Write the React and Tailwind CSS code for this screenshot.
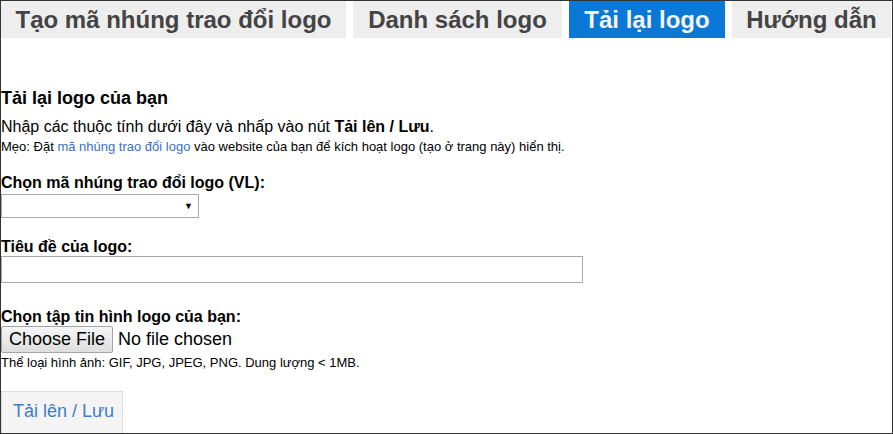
import React from "react";

const tabs = [
    { label: "Tạo mã nhúng trao đổi logo", width: "w-[345px]" },
    { label: "Danh sách logo", width: "w-[209px]" },
    { label: "Tải lại logo", width: "w-[156px]", active: true },
    { label: "Hướng dẫn", width: "w-[159px]" },
];

const App = () => {
    return (
        <div className="w-[893px] h-[434px] overflow-hidden border border-[#333] bg-white font-['Liberation_Sans',Arial,sans-serif] text-black">
            {/* Tabs */}
            <div className="flex gap-[7px]">
                {tabs.map((tab) => (
                    <div
                        key={tab.label}
                        className={`${tab.width} shrink-0 h-[37px] flex items-center justify-center text-[24px] font-bold leading-none ${
                            tab.active
                                ? "bg-[#0a78d7] text-[#f4f4f4]"
                                : "bg-[#eeeeee] text-[#444]"
                        }`}
                    >
                        {tab.label}
                    </div>
                ))}
            </div>

            {/* Form */}
            <div className="pt-[50px]">
                <h3 className="text-[18px] font-bold leading-[21px]">
                    Tải lại logo của bạn
                </h3>
                <p className="mt-[9px] text-[16px] leading-[18px]">
                    Nhập các thuộc tính dưới đây và nhấp vào nút{" "}
                    <b>Tải lên / Lưu</b>.
                </p>
                <p className="mt-[3px] text-[13px] leading-[15px]">
                    Mẹo: Đặt{" "}
                    <a href="#" className="text-[#3b6fc9]">
                        mã nhúng trao đổi logo
                    </a>{" "}
                    vào website của bạn để kích hoạt logo (tạo ở trang này) hiển thị.
                </p>

                <label className="block mt-[20px] text-[16px] font-bold leading-[18px]">
                    Chọn mã nhúng trao đổi logo (VL):
                </label>
                <div className="mt-[2px] w-[198px] h-[24px] border border-[#a9a9a9] flex items-center justify-end pr-[5px]">
                    <span className="text-[9px] leading-none">▼</span>
                </div>

                <label className="block mt-[20px] text-[16px] font-bold leading-[18px]">
                    Tiêu đề của logo:
                </label>
                <input
                    type="text"
                    className="block mt-0 w-[582px] h-[27px] border border-[#a9a9a9] outline-none"
                />

                <label className="block mt-[25px] text-[16px] font-bold leading-[18px]">
                    Chọn tập tin hình logo của bạn:
                </label>
                <div className="flex items-center gap-[5px] text-[18px] leading-[21px]">
                    <div className="w-[112px] h-[27px] flex items-center justify-center border border-[#a5a5a5] rounded-[2px] bg-gradient-to-b from-[#f6f6f6] to-[#dedede]">
                        Choose File
                    </div>
                    <span>No file chosen</span>
                </div>
                <p className="mt-[2px] text-[13px] leading-[15px]">
                    Thể loại hình ảnh: GIF, JPG, JPEG, PNG. Dung lượng &lt; 1MB.
                </p>

                <button className="flex items-start mt-[21px] w-[122px] h-[50px] border border-[#dddddd] bg-[#f4f4f4] pl-[11px] pt-[9px] text-[18px] leading-[21px] text-[#3d7cc9]">
                    Tải lên / Lưu
                </button>
            </div>
        </div>
    );
};

export default App;
